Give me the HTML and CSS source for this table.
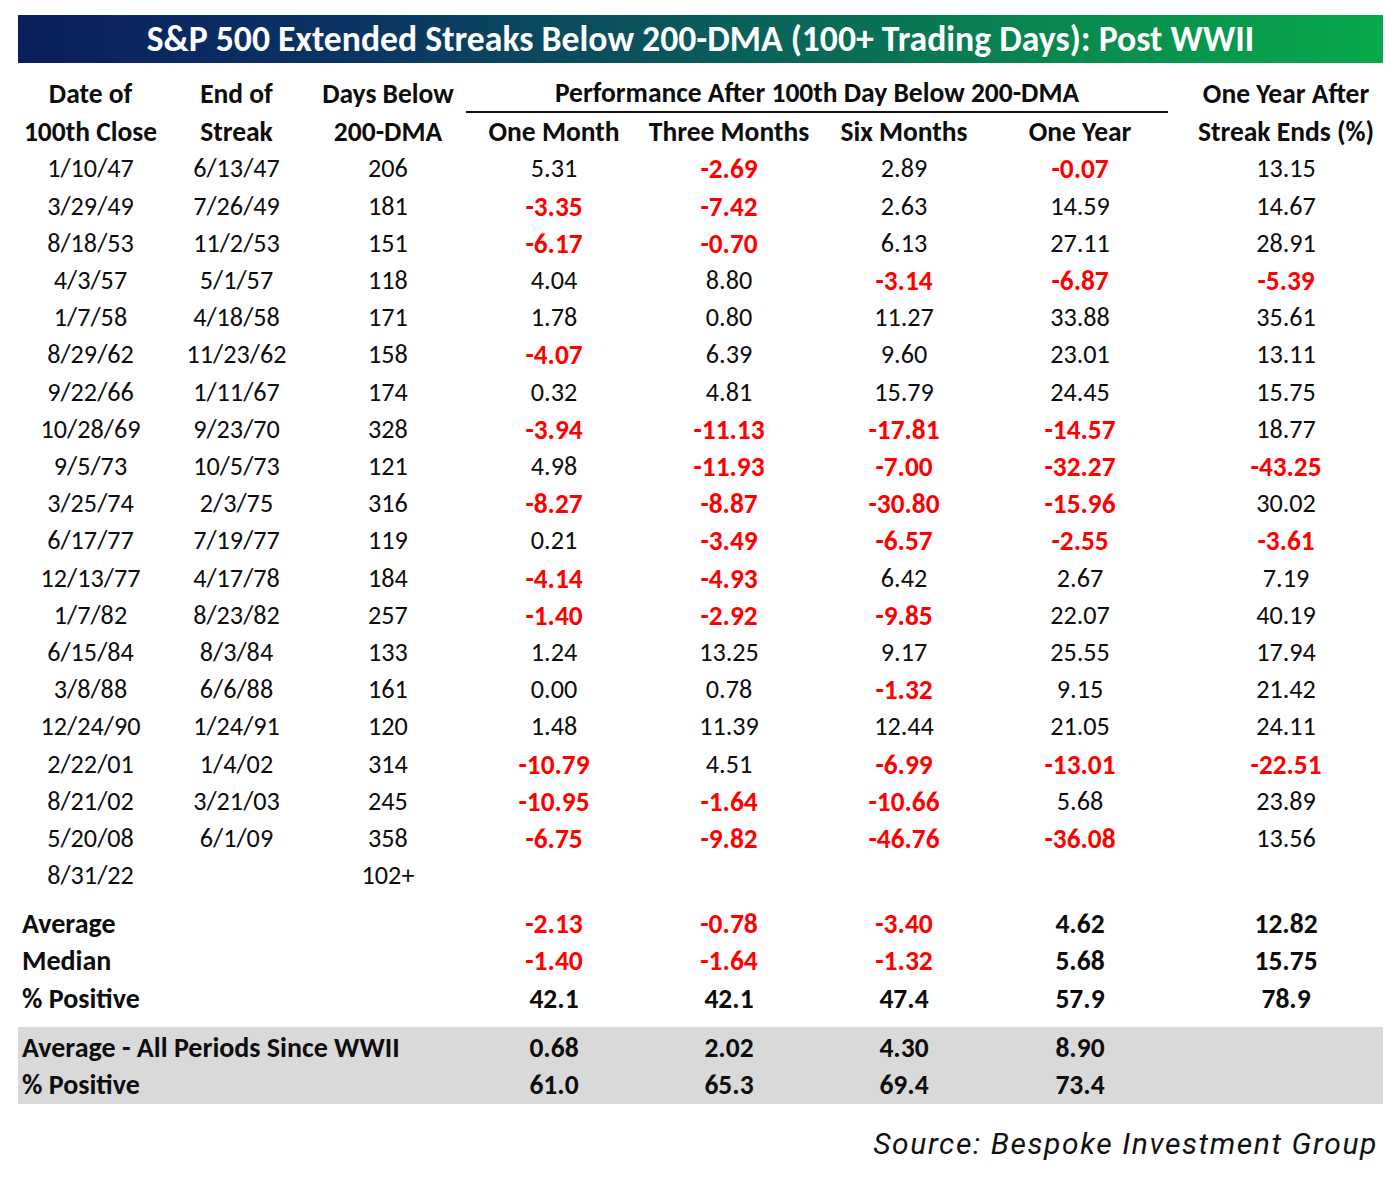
FILE: index.html
```html
<!DOCTYPE html>
<html lang="en">
<head>
<meta charset="utf-8">
<title>S&amp;P 500 Extended Streaks Below 200-DMA</title>
<link rel="stylesheet" href="styles.css">
</head>
<body>
<div class="page">
  <h1 class="title">S&amp;P 500 Extended Streaks Below 200-DMA (100+ Trading Days): Post WWII</h1>
  <table class="streaks">
    <colgroup>
      <col class="c1"><col class="c2"><col class="c3"><col class="c4"><col class="c5"><col class="c6"><col class="c7"><col class="c8">
    </colgroup>
    <thead>
      <tr>
        <th>Date of</th><th>End of</th><th>Days Below</th>
        <th colspan="4" class="group">Performance After 100th Day Below 200-DMA</th>
        <th class="last">One Year After</th>
      </tr>
      <tr>
        <th>100th Close</th><th>Streak</th><th>200-DMA</th>
        <th>One Month</th><th>Three Months</th><th>Six Months</th><th>One Year</th>
        <th class="last">Streak Ends (%)</th>
      </tr>
    </thead>
    <tbody class="data">
      <tr><td>1/10/47</td><td>6/13/47</td><td>206</td><td>5.31</td><td class="neg">-2.69</td><td>2.89</td><td class="neg">-0.07</td><td class="last">13.15</td></tr>
      <tr><td>3/29/49</td><td>7/26/49</td><td>181</td><td class="neg">-3.35</td><td class="neg">-7.42</td><td>2.63</td><td>14.59</td><td class="last">14.67</td></tr>
      <tr><td>8/18/53</td><td>11/2/53</td><td>151</td><td class="neg">-6.17</td><td class="neg">-0.70</td><td>6.13</td><td>27.11</td><td class="last">28.91</td></tr>
      <tr><td>4/3/57</td><td>5/1/57</td><td>118</td><td>4.04</td><td>8.80</td><td class="neg">-3.14</td><td class="neg">-6.87</td><td class="last neg">-5.39</td></tr>
      <tr><td>1/7/58</td><td>4/18/58</td><td>171</td><td>1.78</td><td>0.80</td><td>11.27</td><td>33.88</td><td class="last">35.61</td></tr>
      <tr><td>8/29/62</td><td>11/23/62</td><td>158</td><td class="neg">-4.07</td><td>6.39</td><td>9.60</td><td>23.01</td><td class="last">13.11</td></tr>
      <tr><td>9/22/66</td><td>1/11/67</td><td>174</td><td>0.32</td><td>4.81</td><td>15.79</td><td>24.45</td><td class="last">15.75</td></tr>
      <tr><td>10/28/69</td><td>9/23/70</td><td>328</td><td class="neg">-3.94</td><td class="neg">-11.13</td><td class="neg">-17.81</td><td class="neg">-14.57</td><td class="last">18.77</td></tr>
      <tr><td>9/5/73</td><td>10/5/73</td><td>121</td><td>4.98</td><td class="neg">-11.93</td><td class="neg">-7.00</td><td class="neg">-32.27</td><td class="last neg">-43.25</td></tr>
      <tr><td>3/25/74</td><td>2/3/75</td><td>316</td><td class="neg">-8.27</td><td class="neg">-8.87</td><td class="neg">-30.80</td><td class="neg">-15.96</td><td class="last">30.02</td></tr>
      <tr><td>6/17/77</td><td>7/19/77</td><td>119</td><td>0.21</td><td class="neg">-3.49</td><td class="neg">-6.57</td><td class="neg">-2.55</td><td class="last neg">-3.61</td></tr>
      <tr><td>12/13/77</td><td>4/17/78</td><td>184</td><td class="neg">-4.14</td><td class="neg">-4.93</td><td>6.42</td><td>2.67</td><td class="last">7.19</td></tr>
      <tr><td>1/7/82</td><td>8/23/82</td><td>257</td><td class="neg">-1.40</td><td class="neg">-2.92</td><td class="neg">-9.85</td><td>22.07</td><td class="last">40.19</td></tr>
      <tr><td>6/15/84</td><td>8/3/84</td><td>133</td><td>1.24</td><td>13.25</td><td>9.17</td><td>25.55</td><td class="last">17.94</td></tr>
      <tr><td>3/8/88</td><td>6/6/88</td><td>161</td><td>0.00</td><td>0.78</td><td class="neg">-1.32</td><td>9.15</td><td class="last">21.42</td></tr>
      <tr><td>12/24/90</td><td>1/24/91</td><td>120</td><td>1.48</td><td>11.39</td><td>12.44</td><td>21.05</td><td class="last">24.11</td></tr>
      <tr><td>2/22/01</td><td>1/4/02</td><td>314</td><td class="neg">-10.79</td><td>4.51</td><td class="neg">-6.99</td><td class="neg">-13.01</td><td class="last neg">-22.51</td></tr>
      <tr><td>8/21/02</td><td>3/21/03</td><td>245</td><td class="neg">-10.95</td><td class="neg">-1.64</td><td class="neg">-10.66</td><td>5.68</td><td class="last">23.89</td></tr>
      <tr><td>5/20/08</td><td>6/1/09</td><td>358</td><td class="neg">-6.75</td><td class="neg">-9.82</td><td class="neg">-46.76</td><td class="neg">-36.08</td><td class="last">13.56</td></tr>
      <tr><td>8/31/22</td><td></td><td>102+</td><td></td><td></td><td></td><td></td><td class="last"></td></tr>
    </tbody>
    <tbody class="summary">
      <tr class="first"><td colspan="3" class="label">Average</td><td class="neg">-2.13</td><td class="neg">-0.78</td><td class="neg">-3.40</td><td>4.62</td><td class="last">12.82</td></tr>
      <tr><td colspan="3" class="label">Median</td><td class="neg">-1.40</td><td class="neg">-1.64</td><td class="neg">-1.32</td><td>5.68</td><td class="last">15.75</td></tr>
      <tr><td colspan="3" class="label">% Positive</td><td>42.1</td><td>42.1</td><td>47.4</td><td>57.9</td><td class="last">78.9</td></tr>
    </tbody>
    <tbody class="gap"><tr><td colspan="8"></td></tr></tbody>
    <tbody class="summary shaded">
      <tr class="first"><td colspan="3" class="label">Average - All Periods Since WWII</td><td>0.68</td><td>2.02</td><td>4.30</td><td>8.90</td><td class="last"></td></tr>
      <tr class="end"><td colspan="3" class="label">% Positive</td><td>61.0</td><td>65.3</td><td>69.4</td><td>73.4</td><td class="last"></td></tr>
    </tbody>
  </table>
  <p class="source">Source: Bespoke Investment Group</p>
</div>
</body>
</html>
```

FILE: styles.css
```css
* { box-sizing: border-box; }

html, body {
  margin: 0;
  padding: 0;
  background: #ffffff;
}

body {
  font-family: Carlito, Lato, "Liberation Sans", sans-serif;
  color: #0d0d0d;
}

.page {
  width: 1365px;
  margin: 15px 0 0 18px;
}

.title {
  margin: 0;
  height: 48px;
  line-height: 48px;
  text-align: center;
  color: #ffffff;
  font-size: 35.7px;
  font-weight: 700;
  background: linear-gradient(90deg, #0a1e5e 0%, #0a3563 25%, #0a5a5c 50%, #08874f 75%, #08a94b 100%);
}

.streaks {
  margin-top: 12px;
  border-collapse: collapse;
  table-layout: fixed;
  width: 1365px;
  font-size: 26.2px;
}

.c1 { width: 145px; }
.c2 { width: 147px; }
.c3 { width: 156px; }
.c4 { width: 176px; }
.c5 { width: 174px; }
.c6 { width: 176px; }
.c7 { width: 176px; }
.c8 { width: 215px; }

.streaks th,
.streaks td {
  padding: 0;
  height: 37.2px;
  line-height: 37.2px;
  text-align: center;
  white-space: nowrap;
}

.streaks th {
  font-weight: 700;
  font-size: 27.5px;
}

.streaks .last {
  padding-left: 21px;
}

.streaks th.group {
  border-bottom: 2.5px solid #111;
  line-height: 34px;
}

.neg {
  color: #ff0000;
  font-weight: 700;
  font-size: 27.3px;
}

.summary td {
  font-weight: 700;
  font-size: 27.5px;
}

.summary .label {
  text-align: left;
  padding-left: 4px;
  font-size: 28px;
}

.data + .summary tr.first td {
  height: 48px;
  padding-top: 11px;
  line-height: 37px;
}

.gap td {
  height: 10px;
  line-height: 10px;
}

.shaded td {
  background: #d9d9d9;
}

.shaded tr.first td {
  height: 39px;
  padding-top: 2px;
  line-height: 37px;
}

.shaded tr.end td {
  height: 38px;
  line-height: 37px;
}

.source {
  margin: 22px 5px 0 0;
  text-align: right;
  font-family: Roboto, "Noto Sans", sans-serif;
  font-style: italic;
  font-size: 30px;
  font-weight: 400;
  letter-spacing: 1.6px;
  color: #111;
}
```
